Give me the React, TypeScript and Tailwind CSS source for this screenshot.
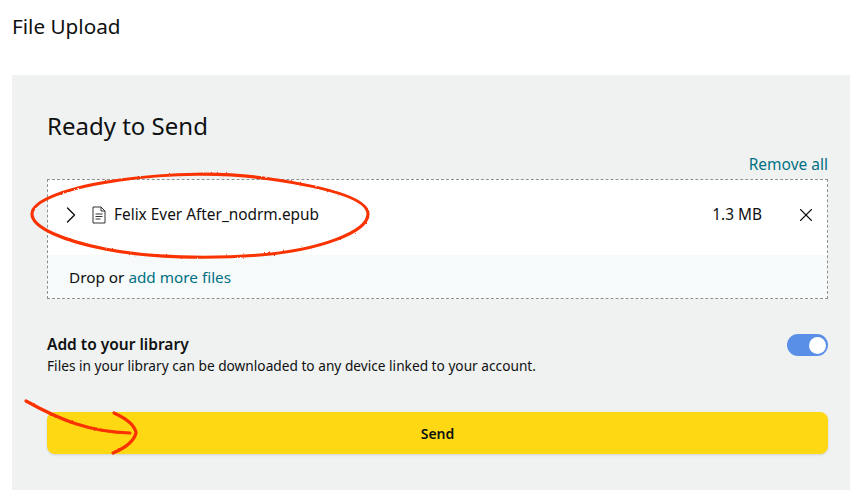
import { ChevronRight, X } from 'lucide-react'

export default function App() {
    return (
        <div className="relative h-[494px] w-[850px] overflow-hidden bg-white text-[#0f1111]" style={{ fontFamily: "'Noto Sans', 'Liberation Sans', sans-serif" }}>
            <h1 className="h-[75px] pl-3 pt-[12px] text-[20.7px] leading-[28px]">File Upload</h1>

            {/* panel */}
            <div className="ml-3 h-[415px] bg-[#f0f2f2] pl-[35px] pr-[22px] pt-[35px]">
                <h2 className="text-[24px] leading-[32px]">Ready to Send</h2>

                <div className="mt-[12px] flex h-[20px] justify-end text-[15.5px] leading-[20px] text-[#007185]">Remove all</div>

                {/* file list */}
                <div className="mt-[5px] h-[120px] border border-dashed border-[#8c9292] bg-white">
                    <div className="flex h-[75px] items-center pb-[6px] pl-[9px] pr-[10px]">
                        <ChevronRight size={28} strokeWidth={1.2} />
                        <svg className="ml-[6px]" width="16" height="18" viewBox="0 0 16 18" fill="none" stroke="#333" strokeWidth="1">
                            <path d="M2 1h8l4 4v12H2z" />
                            <path d="M10 1v4h4M4.5 8h7M4.5 10.5h7M4.5 13h5" />
                        </svg>
                        <span className="ml-[7px] text-[15.4px]">Felix Ever After_nodrm.epub</span>
                        <span className="ml-auto text-[15.4px]">1.3 MB</span>
                        <X className="ml-[33px]" size={22} strokeWidth={1.2} />
                    </div>
                    <div className="flex h-[43px] items-center bg-[#f7fafa] pl-[21px] pt-[2px] text-[15.3px]">
                        <span>Drop or&nbsp;</span>
                        <span className="text-[#007185]">add more files</span>
                    </div>
                </div>

                {/* library toggle */}
                <div className="mt-[35px] flex h-[45px] justify-between">
                    <div>
                        <div className="text-[15.5px] font-semibold leading-[20px]">Add to your library</div>
                        <div className="mt-[2px] text-[13.7px] leading-[20px]">Files in your library can be downloaded to any device linked to your account.</div>
                    </div>
                    <div className="flex h-[22px] w-[41px] items-center justify-end rounded-full bg-[#5a8fe8] pr-[2px]">
                        <div className="h-[17px] w-[17px] rounded-full bg-white" />
                    </div>
                </div>

                <button className="mt-[33px] h-[42px] w-full rounded-lg bg-[#ffd814] text-[14px] font-semibold shadow-sm">Send</button>
            </div>

            {/* red hand drawn marks */}
            <svg className="pointer-events-none absolute left-0 top-0" width="850" height="494" fill="none" stroke="#f93200" strokeWidth="3.2" strokeLinecap="round">
                <defs>
                    <filter id="rough" x="-5%" y="-5%" width="110%" height="110%">
                        <feTurbulence type="fractalNoise" baseFrequency="0.35" numOctaves="2" seed="3" />
                        <feDisplacementMap in="SourceGraphic" scale="2" />
                    </filter>
                </defs>
                <g filter="url(#rough)">
                    <path d="M32 214C32 200 70 187 120 180C170 173 225 172 270 179C325 187 368 198 368 214C368 232 320 250 260 255C210 259 150 258 105 249C65 241 32 228 32 214Z" />
                    <path d="M26 401C60 420 90 432 130 433M114 413C125 418 135 425 136 433C134 441 125 448 113 453" />
                </g>
            </svg>
        </div>
    )
}
